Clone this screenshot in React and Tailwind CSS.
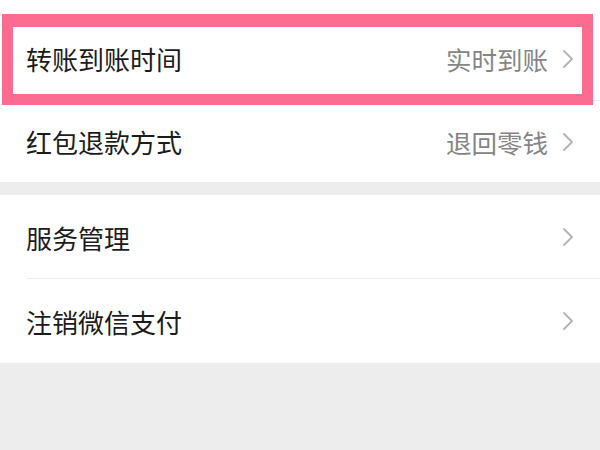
import React from "react";

function Chevron() {
  return (
    <svg width="12" height="20" viewBox="0 0 12 20" className="ml-[14px] shrink-0">
      <path d="M2 2 L10 10 L2 18" fill="none" stroke="#b3b3b3" strokeWidth="1.8" strokeLinecap="round" strokeLinejoin="round" />
    </svg>
  );
}

function Row({ label, value, h, divider }) {
  return (
    <div className={`relative flex items-center pl-[26px] pr-[26px] bg-white ${h}`}>
      <span className="flex-1 pt-[1px] text-[26px] leading-none text-[#1c1c1c]">{label}</span>
      {value && <span className="pt-[1px] text-[25.5px] leading-none text-[#858585]">{value}</span>}
      <Chevron />
      {divider && <div className="absolute bottom-0 left-[27px] right-0 h-px bg-[#ededed]" />}
    </div>
  );
}

export default function App() {
  return (
    <div
      className="relative w-[600px] h-[450px] overflow-hidden bg-[#ededed] flex flex-col"
      style={{ fontFamily: '"Noto Sans CJK SC", "Noto Sans", sans-serif' }}
    >
      <div className="bg-white pt-[16px]">
        <Row label="转账到账时间" value="实时到账" h="h-[85px]" divider />
        <Row label="红包退款方式" value="退回零钱" h="h-[81px]" />
      </div>
      <div className="h-[13px]" />
      <div className="bg-white">
        <Row label="服务管理" h="h-[84px]" divider />
        <Row label="注销微信支付" h="h-[84px]" />
      </div>
      <div className="absolute left-[2px] top-[14px] w-[591px] h-[91px] border-[#fe6b91] border-x-[11px] border-b-[11px] border-t-[13px]" />
    </div>
  );
}
